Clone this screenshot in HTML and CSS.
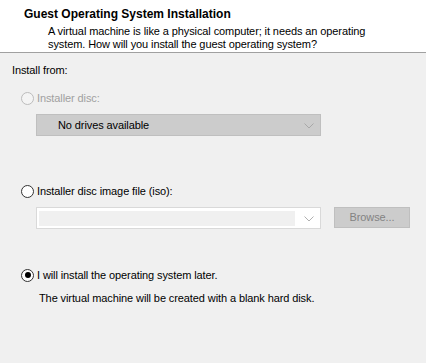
FILE: index.html
```html
<!DOCTYPE html>
<html lang="en">
<head>
  <meta charset="UTF-8">
  <title>Guest Operating System Installation</title>
  <link rel="stylesheet" href="styles.css">
</head>
<body>
  <div class="header">
    <div class="title">Guest Operating System Installation</div>
    <div class="subtitle">A virtual machine is like a physical computer; it needs an operating<br>system. How will you install the guest operating system?</div>
  </div>
  <div class="body">
    <div class="label">Install from:</div>

    <div class="option disabled">
      <span class="radio"></span>
      <span>Installer disc:</span>
    </div>
    <div class="row">
      <div class="select">
        <span>No drives available</span>
        <svg class="chev" width="10" height="6" viewBox="0 0 10 6"><path d="M0.5 0.5 L5 5 L9.5 0.5" fill="none" stroke="#a8a8a8" stroke-width="1"/></svg>
      </div>
    </div>

    <div class="option iso">
      <span class="radio"></span>
      <span>Installer disc image file (iso):</span>
    </div>
    <div class="row">
      <div class="combo">
        <div class="combo-edit"></div>
        <svg class="chev" width="10" height="6" viewBox="0 0 10 6"><path d="M0.5 0.5 L5 5 L9.5 0.5" fill="none" stroke="#b0b0b0" stroke-width="1"/></svg>
      </div>
      <div class="browse">Browse...</div>
    </div>

    <div class="option later">
      <span class="radio checked"></span>
      <span>I will install the operating system later.</span>
    </div>
    <div class="note">The virtual machine will be created with a blank hard disk.</div>
  </div>
</body>
</html>
```

FILE: styles.css
```css
html, body {
  margin: 0;
  padding: 0;
}
body {
  width: 426px;
  height: 363px;
  background: #f0f0f0;
  font-family: "Liberation Sans", Arial, sans-serif;
  font-size: 11px;
  letter-spacing: -0.1px;
  color: #000;
  overflow: hidden;
}
.header {
  background: #fff;
  height: 53px;
  border-bottom: 1px solid #a0a0a0;
  padding: 6px 0 0 24px;
  box-sizing: border-box;
}
.title {
  font-weight: bold;
  font-size: 12px;
  letter-spacing: 0;
  line-height: 16px;
}
.subtitle {
  padding-left: 24px;
  margin-top: 3px;
  line-height: 13px;
}
.body {
  padding: 9px 0 0 12px;
}
.label {
  line-height: 16px;
}
.option {
  display: flex;
  align-items: center;
  margin-left: 9px;
  height: 16px;
}
.option.disabled {
  margin-top: 12px;
  color: #a0a0a0;
}
.option.iso {
  margin-top: 47px;
}
.option.later {
  margin-top: 38px;
}
.radio {
  width: 11px;
  height: 11px;
  border: 1px solid #333;
  border-radius: 50%;
  background: #fff;
  margin-right: 3px;
  position: relative;
  flex: none;
}
.disabled .radio {
  border-color: #bcbcbc;
  background: #f4f4f4;
}
.radio.checked::after {
  content: "";
  position: absolute;
  left: 2.5px;
  top: 2.5px;
  width: 6px;
  height: 6px;
  border-radius: 50%;
  background: #000;
}
.row {
  display: flex;
  margin: 8px 0 0 24px;
}
.select {
  width: 285px;
  height: 22px;
  box-sizing: border-box;
  background: #cccccc;
  border: 1px solid #bfbfbf;
  display: flex;
  align-items: center;
  padding: 0 6px 0 21px;
}
.select span {
  flex: 1;
}
.combo {
  width: 285px;
  height: 22px;
  box-sizing: border-box;
  background: #fff;
  border: 1px solid #d9d9d9;
  display: flex;
  align-items: center;
  padding: 0 6px 0 2px;
}
.combo-edit {
  flex: 1;
  height: 15px;
  background: #f0f0f0;
  margin-right: 9px;
}
.chev {
  display: block;
  margin-top: 1px;
}
.browse {
  width: 76px;
  height: 21px;
  box-sizing: border-box;
  background: #cccccc;
  border: 1px solid #bfbfbf;
  color: #838383;
  text-align: center;
  line-height: 19px;
  margin-left: 13px;
}
.note {
  margin: 7px 0 0 27px;
  line-height: 16px;
}
```
